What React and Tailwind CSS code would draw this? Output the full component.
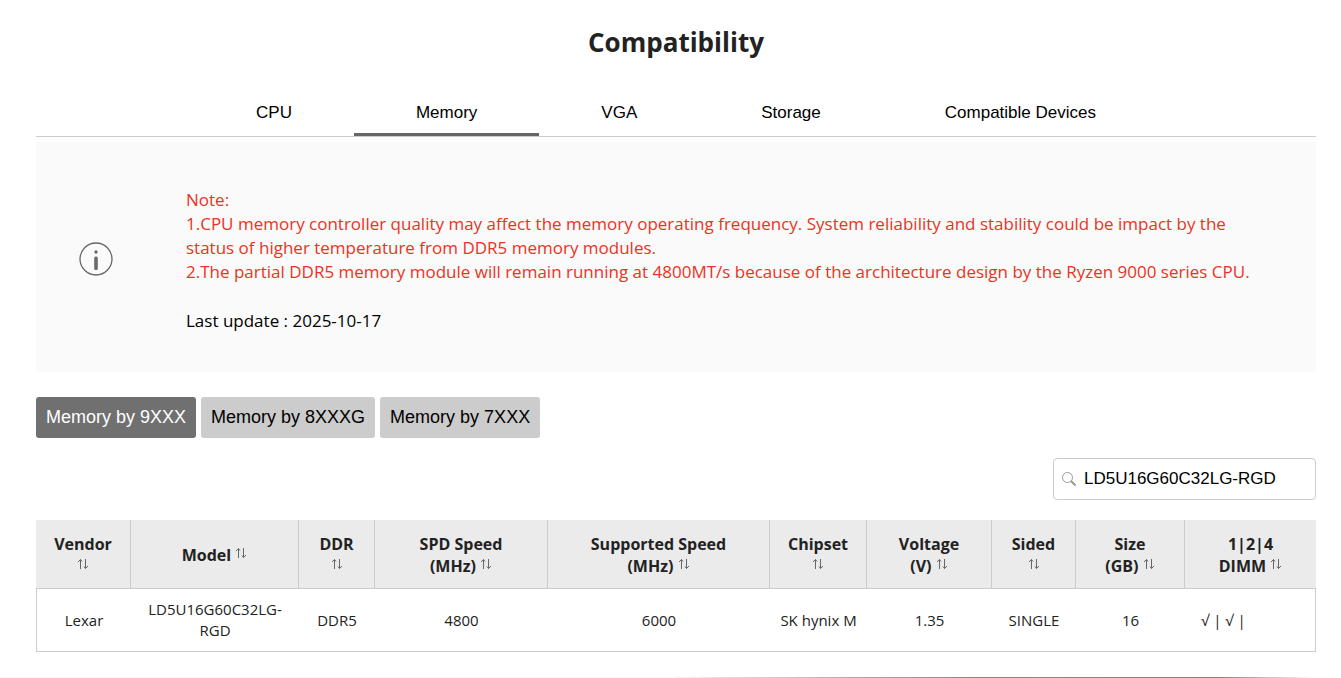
import { useState } from 'react';

const tabs = ['CPU', 'Memory', 'VGA', 'Storage', 'Compatible Devices'];

const series = ['Memory by 9XXX', 'Memory by 8XXXG', 'Memory by 7XXX'];

const columns = [
    { label: 'Vendor', width: 'w-[95px]' },
    { label: 'Model', width: 'w-[168px]', inline: true },
    { label: 'DDR', width: 'w-[76px]' },
    { label: 'SPD Speed', unit: '(MHz)', width: 'w-[173px]' },
    { label: 'Supported Speed', unit: '(MHz)', width: 'w-[222px]' },
    { label: 'Chipset', width: 'w-[97px]' },
    { label: 'Voltage', unit: '(V)', width: 'w-[125px]' },
    { label: 'Sided', width: 'w-[84px]' },
    { label: 'Size', unit: '(GB)', width: 'w-[109px]' },
    { label: '1|2|4', unit: 'DIMM', width: 'w-[131px]' },
];

const rows = [
    ['Lexar', 'LD5U16G60C32LG-RGD', 'DDR5', '4800', '6000', 'SK hynix M', '1.35', 'SINGLE', '16', '√ | √ |'],
];

const SortIcon = () => (
    <svg viewBox="0 0 12 12" className="mb-[2px] inline-block size-3 align-baseline" fill="none" stroke="#666" strokeWidth="1" aria-hidden="true">
        <path d="M3.5 11V1.5M1 4l2.5-2.5L5 3.5M8.5 1v9.5M7 8.5l1.5 2L11 8" />
    </svg>
);

const InfoIcon = () => (
    <svg viewBox="0 0 34 34" className="size-[34px]" fill="none" aria-hidden="true">
        <circle cx="17" cy="17" r="16" stroke="#666" strokeWidth="1.3" />
        <circle cx="17" cy="10" r="1.7" fill="#6b6870" />
        <rect x="15.2" y="14.5" width="3.6" height="13.5" rx="1.5" fill="#6b6870" />
    </svg>
);

const SearchIcon = () => (
    <svg viewBox="0 0 16 16" className="size-4 shrink-0" fill="none" aria-hidden="true">
        <circle cx="6.5" cy="6.5" r="5" stroke="#999" strokeWidth="1" />
        <path d="M10.2 10.2l4.3 4.3" stroke="#999" strokeWidth="2" />
    </svg>
);

const App = () => {
    const [tab, setTab] = useState('Memory');
    const [active, setActive] = useState(series[0]);
    const [query, setQuery] = useState('LD5U16G60C32LG-RGD');

    const visible = rows.filter((row) => row[1].toLowerCase().includes(query.toLowerCase()));

    return (
        <div className="bg-white text-[#222] font-['Open_Sans',sans-serif]">
            <main className="pt-6 pr-[25px] pb-[25px] pl-9">
                <h2 className="text-center text-[26px] leading-9 font-bold">Compatibility</h2>

                <nav className="mt-7 flex justify-center border-b border-[#ccc] font-['Liberation_Sans',sans-serif]">
                    {tabs.map((name) => (
                        <button
                            key={name}
                            onClick={() => setTab(name)}
                            className={`h-12 border-b-3 px-[62px] pt-1 text-[17px] text-black ${tab === name ? 'border-[#666]' : 'border-transparent'}`}
                        >
                            {name}
                        </button>
                    ))}
                </nav>

                <section className="mt-[5px] flex items-center bg-[#fafafa] pt-[46px] pb-[39px] text-[17px] leading-6 text-black">
                    <div className="flex w-[120px] shrink-0 justify-center pb-1">
                        <InfoIcon />
                    </div>
                    <div className="ml-[30px] flex-1 pr-12">
                        <p className="text-[#ea3323]">
                            Note:
                            <br />
                            1.CPU memory controller quality may affect the memory operating frequency. System reliability and stability could be impact by the status of higher temperature from DDR5 memory modules.
                            <br />
                            2.The partial DDR5 memory module will remain running at 4800MT/s because of the architecture design by the Ryzen 9000 series CPU.
                        </p>
                        <p className="mt-[25px]">Last update : 2025-10-17</p>
                    </div>
                </section>

                <div className="mt-[25px] flex gap-[5px] font-['Liberation_Sans',sans-serif] text-lg">
                    {series.map((name) => (
                        <button
                            key={name}
                            onClick={() => setActive(name)}
                            className={`h-[41px] rounded-[3px] px-[10px] pb-[2px] ${active === name ? 'bg-[#707070] text-white' : 'bg-[#ccc] text-black'}`}
                        >
                            {name}
                        </button>
                    ))}
                </div>

                <div className="mt-5 flex justify-end">
                    <label className="flex h-[42px] w-[263px] items-center gap-[7px] rounded border border-[#ccc] px-[7px]">
                        <SearchIcon />
                        <input
                            type="text"
                            aria-label="Search"
                            value={query}
                            onChange={(e) => setQuery(e.target.value)}
                            className="w-full min-w-0 font-['Liberation_Sans',sans-serif] text-[17px] text-black outline-none"
                        />
                    </label>
                </div>

                <table className="mt-5 w-full table-fixed border-separate border-spacing-0 text-center">
                    <thead>
                        <tr className="bg-[#ebebeb]">
                            {columns.map((col) => (
                                <th key={col.label} className={`${col.width} h-[69px] border-r border-b border-[#ccc] pt-[2px] text-base leading-[22px] font-bold last:border-r-0`}>
                                    {col.label}
                                    {col.inline ? ' ' : <br />}
                                    {col.unit} <SortIcon />
                                </th>
                            ))}
                        </tr>
                    </thead>
                    <tbody>
                        {visible.map((row) => (
                            <tr key={row[1]}>
                                {row.map((cell, i) => (
                                    <td key={i} className="h-[63px] border-b border-[#ccc] px-2 text-[15px] leading-[21px] first:border-l last:border-r last:pl-4 last:text-left">
                                        {cell}
                                    </td>
                                ))}
                            </tr>
                        ))}
                    </tbody>
                </table>
            </main>
            <footer className="h-px bg-[linear-gradient(to_right,#f6f6f6_0%,#f6f6f6_50%,#b5b3b2_62%,#8f8680_72%,#8a807a_91%,#ffffff_98%)]" />
        </div>
    );
};

export default App;
